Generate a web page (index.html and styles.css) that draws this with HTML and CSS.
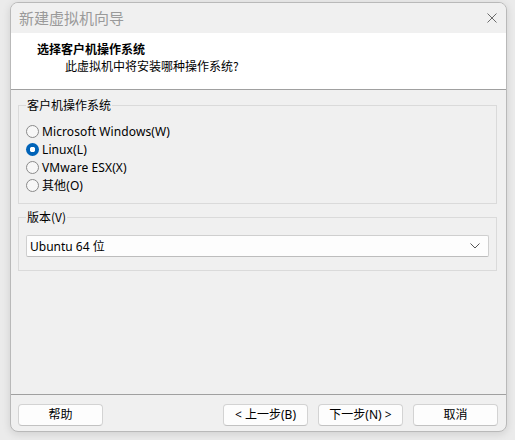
FILE: index.html
```html
<!DOCTYPE html>
<html lang="zh-CN">
<head>
<meta charset="utf-8">
<title>新建虚拟机向导</title>
<link rel="stylesheet" href="styles.css">
</head>
<body>
<div class="window">
  <div class="titlebar">
    <span class="title">新建虚拟机向导</span>
    <svg class="close" width="10" height="10" viewBox="0 0 10 10"><path d="M0.5 0.5 L9.5 9.5 M9.5 0.5 L0.5 9.5" stroke="#6b6b6b" stroke-width="1" fill="none"/></svg>
  </div>
  <div class="header">
    <div class="h-title">选择客户机操作系统</div>
    <div class="h-sub">此虚拟机中将安装哪种操作系统?</div>
  </div>
  <div class="content">
    <fieldset class="group group-os">
      <legend>客户机操作系统</legend>
      <label class="radio"><input type="radio" name="os"><span>Microsoft Windows(W)</span></label>
      <label class="radio"><input type="radio" name="os" checked><span>Linux(L)</span></label>
      <label class="radio"><input type="radio" name="os"><span>VMware ESX(X)</span></label>
      <label class="radio"><input type="radio" name="os"><span>其他(O)</span></label>
    </fieldset>
    <fieldset class="group group-ver">
      <legend>版本(V)</legend>
      <div class="select">
        <span>Ubuntu 64 位</span>
        <svg width="10" height="6" viewBox="0 0 10 6"><path d="M0.5 0.5 L5 5 L9.5 0.5" stroke="#555" stroke-width="1" fill="none"/></svg>
      </div>
    </fieldset>
  </div>
  <div class="footer">
    <button class="btn">帮助</button>
    <span class="spacer"></span>
    <button class="btn">&lt; 上一步(B)</button>
    <button class="btn">下一步(N) &gt;</button>
    <button class="btn">取消</button>
  </div>
</div>
</body>
</html>
```
FILE: styles.css
```css
* { box-sizing: border-box; }
html, body { margin: 0; padding: 0; }
body {
  background: #ebebeb;
  width: 515px;
  height: 440px;
  overflow: hidden;
  font-family: "Noto Sans", "Noto Sans CJK SC", sans-serif;
  font-size: 12px;
  color: #000;
}
.window {
  margin: 2px 0 0 10px;
  width: 497px;
  height: 430px;
  border: 1px solid #b9b9b9;
  border-radius: 8px;
  overflow: hidden;
  background: #f0f0f0;
  display: flex;
  flex-direction: column;
  box-shadow: 0 2px 8px rgba(0,0,0,0.12);
}
.titlebar {
  height: 30px;
  display: flex;
  align-items: center;
  justify-content: space-between;
  padding: 0 9px 0 8px;
  background: #f0f0f0;
}
.title {
  font-family: "Noto Sans CJK SC", sans-serif;
  font-size: 15px;
  color: #9a9a9a;
  line-height: 20px;
}
.close { display: block; }
.header {
  height: 57px;
  background: #fff;
  border-bottom: 1px solid #a0a0a0;
  padding-top: 8px;
}
.h-title {
  font-family: "Noto Sans CJK SC", sans-serif;
  font-weight: bold;
  line-height: 16px;
  padding-left: 26px;
}
.h-sub {
  font-family: "Noto Sans CJK SC", sans-serif;
  line-height: 16px;
  margin-top: 1px;
  padding-left: 54px;
}
.content {
  height: 304px;
  padding: 7px 9px 0 7px;
}
.group {
  margin: 0;
  border: 1px solid #dadada;
  padding: 0 7px;
  min-width: 0;
}
.group legend {
  padding: 0 1px;
  line-height: 16px;
  font-family: "Noto Sans CJK SC", sans-serif;
}
.group-os {
  padding-top: 9px;
  padding-bottom: 9px;
}
.radio {
  display: flex;
  align-items: center;
  height: 18px;
  gap: 3px;
}
.radio span { letter-spacing: 0.1px; }
.radio input {
  appearance: none;
  -webkit-appearance: none;
  margin: 0;
  width: 13px;
  height: 13px;
  border: 1px solid #8a8a8a;
  border-radius: 50%;
  background: #f7f7f7;
}
.radio input:checked {
  border: none;
  background: radial-gradient(circle, #fff 0 2.6px, #0063b8 3px);
}
.group-ver {
  margin-top: 5px;
  padding-top: 10px;
  padding-bottom: 13px;
}
.select {
  height: 22px;
  background: #fdfdfd;
  border: 1px solid #cfcfcf;
  border-bottom-color: #bdbdbd;
  border-radius: 2px;
  display: flex;
  align-items: center;
  justify-content: space-between;
  padding: 0 8px 0 3px;
}
.select svg { display: block; }
.footer {
  height: 37px;
  border-top: 1px solid #a0a0a0;
  display: flex;
  align-items: flex-start;
  padding: 9px 8px 0 7px;
  gap: 10px;
}
.spacer { flex: 1; }
.btn {
  width: 85px;
  height: 22px;
  margin: 0;
  padding: 0;
  background: #fdfdfd;
  border: 1px solid #d3d3d3;
  border-bottom-color: #c2c2c2;
  border-radius: 4px;
  font-family: "Noto Sans", "Noto Sans CJK SC", sans-serif;
  font-size: 12px;
  color: #000;
  line-height: 18px;
}
```
